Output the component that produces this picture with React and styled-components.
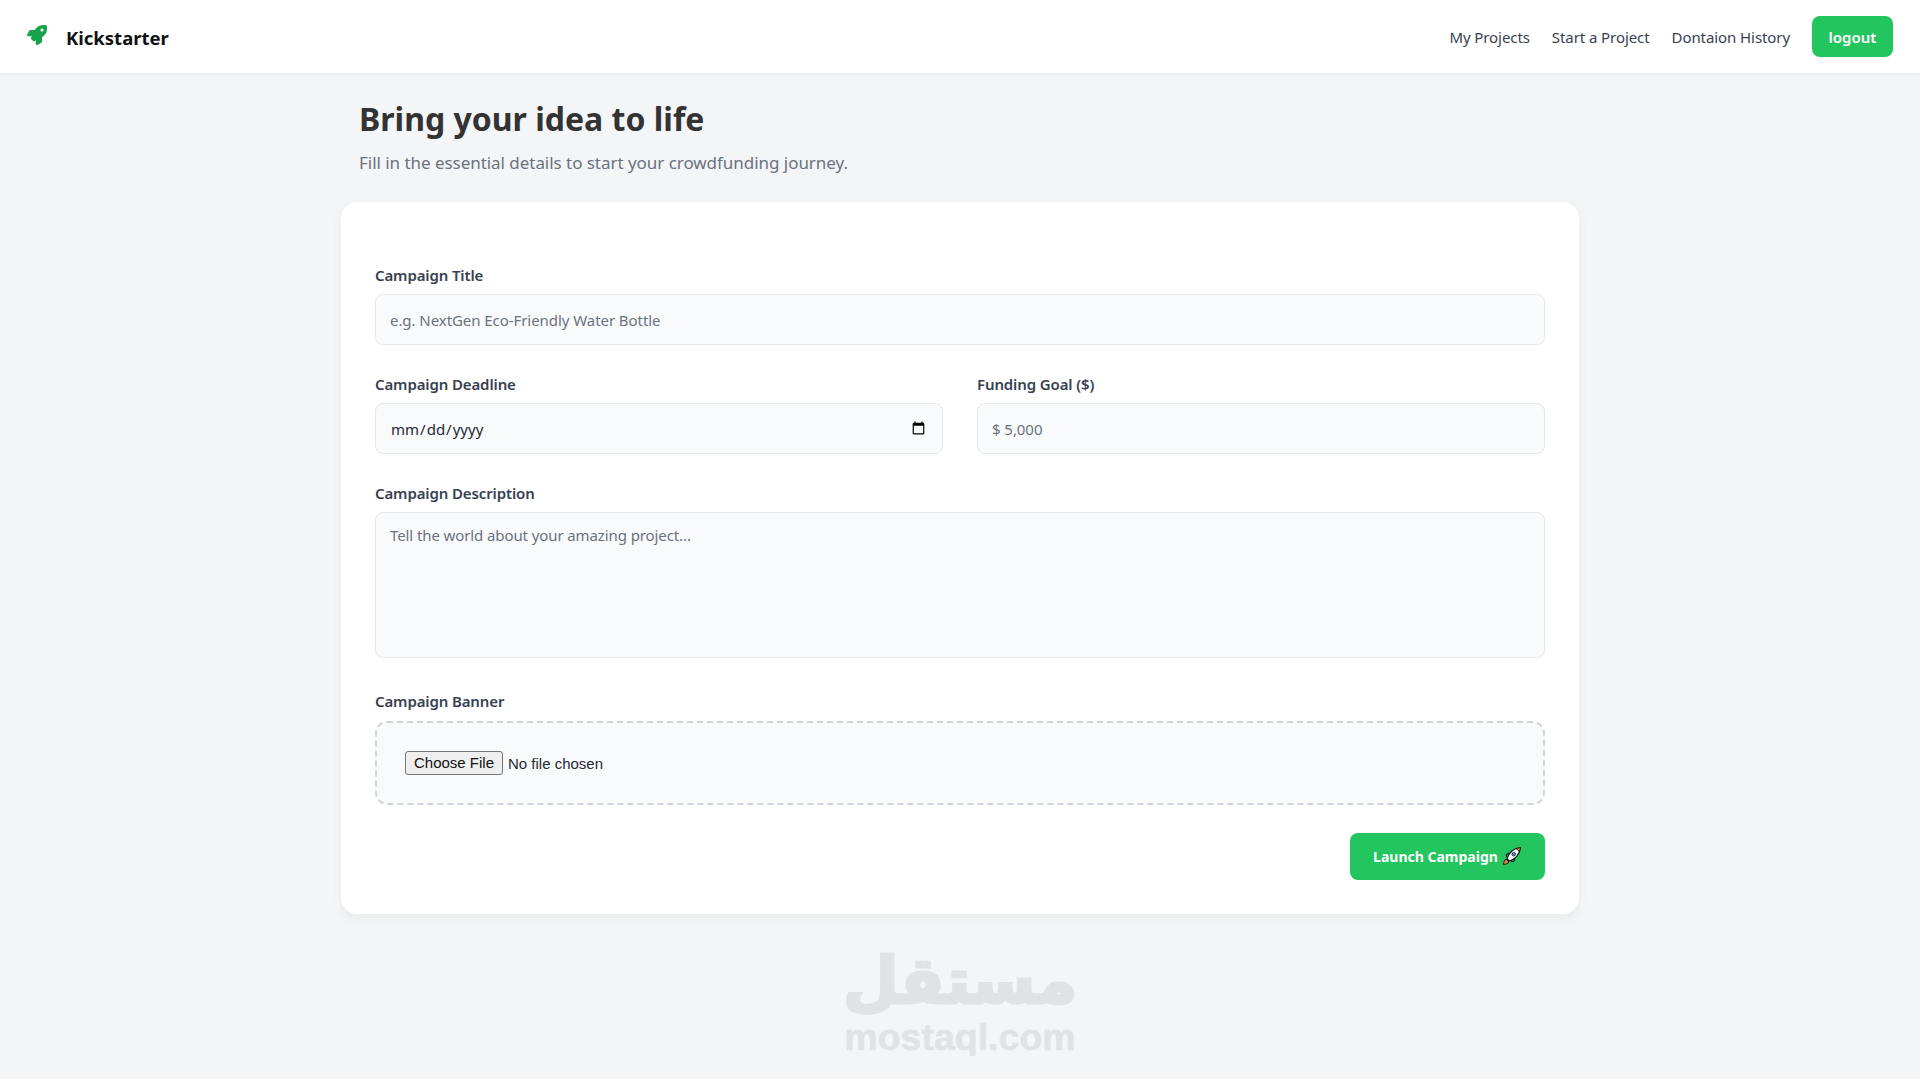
import React from 'react'
import styled, { createGlobalStyle } from 'styled-components'
import { FaRocket } from 'react-icons/fa'

const GlobalStyle = createGlobalStyle`
  html, body { margin: 0; padding: 0; }
  body {
    background: #f4f5f7;
    font-family: "Noto Sans", "Open Sans", sans-serif;
    color: #1f2937;
  }
`

const RocketEmoji = () => (
  <svg width="20" height="20" viewBox="0 0 20 20">
    <path d="M1.500 18.500c.2-2.500 1-4.500 2.500-5.500l3 3c-1 1.500-3 2.300-5.500 2.500z" fill="#e8853a" stroke="#111" strokeWidth="1" strokeLinejoin="round" />
    <path d="M4 8.500L7.500 7l-2 5zM11.500 16L13 12.500l-5 2z" fill="#3f7fc4" stroke="#111" strokeWidth="1" strokeLinejoin="round" />
    <path d="M5 13C6.500 7.500 11 2.500 18.500 1.500 17.500 9 12.500 13.500 7 15z" fill="#f2f7fb" stroke="#111" strokeWidth="1.200" strokeLinejoin="round" />
    <path d="M14 2.700c1.400.5 2.700 1.800 3.300 3.300L18.500 1.500z" fill="#e8853a" stroke="#111" strokeWidth="0.800" strokeLinejoin="round" />
    <circle cx="11.800" cy="8.200" r="1.700" fill="#5d9fd8" stroke="#111" strokeWidth="0.800" />
  </svg>
)

const App = () => {
  return (
    <>
      <GlobalStyle />
      <Nav>
        <Brand>
          <BrandIcon><FaRocket /></BrandIcon>
          <BrandName>Kickstarter</BrandName>
        </Brand>
        <NavLinks>
          <NavLink>My Projects</NavLink>
          <NavLink>Start a Project</NavLink>
          <NavLink>Dontaion History</NavLink>
          <LogoutButton>logout</LogoutButton>
        </NavLinks>
      </Nav>
      <Main>
        <PageHead>
          <Title>Bring your idea to life</Title>
          <Subtitle>Fill in the essential details to start your crowdfunding journey.</Subtitle>
        </PageHead>
        <Card>
          <Field>
            <Label>Campaign Title</Label>
            <Input type="text" placeholder="e.g. NextGen Eco-Friendly Water Bottle" />
          </Field>
          <TwoCols>
            <Field>
              <Label>Campaign Deadline</Label>
              <Input type="date" />
            </Field>
            <Field>
              <Label>Funding Goal ($)</Label>
              <Input type="text" placeholder="$ 5,000" />
            </Field>
          </TwoCols>
          <Field>
            <Label>Campaign Description</Label>
            <TextArea placeholder="Tell the world about your amazing project..." />
          </Field>
          <BannerField>
            <BannerLabel>Campaign Banner</BannerLabel>
            <DropZone>
              <FileInput type="file" />
            </DropZone>
          </BannerField>
          <Actions>
            <LaunchButton>Launch Campaign <RocketEmoji /></LaunchButton>
          </Actions>
        </Card>
        <Watermark>
          <WatermarkArabic>مستقل</WatermarkArabic>
          <WatermarkLatin>mostaql.com</WatermarkLatin>
        </Watermark>
      </Main>
    </>
  )
}

export default App

const Nav = styled.nav`
  height: 73px;
  box-sizing: border-box;
  background: #fff;
  box-shadow: 0 1px 3px rgba(0, 0, 0, 0.06);
  display: flex;
  align-items: center;
  justify-content: space-between;
  padding: 0 27px;
`
const Brand = styled.div`
  display: flex;
  align-items: center;
  gap: 19px;
`
const BrandIcon = styled.span`
  display: flex;
  color: #16a34a;
  font-size: 20px;
  margin-top: -3px;
`
const BrandName = styled.span`
  font-size: 18.500px;
  font-weight: 700;
  color: #111;
  margin-top: 1px;
`
const NavLinks = styled.div`
  display: flex;
  align-items: center;
  gap: 22px;
`
const NavLink = styled.a`
  font-size: 15px;
  letter-spacing: -0.08px;
  color: #374151;
  cursor: pointer;
`
const LogoutButton = styled.button`
  border: 0;
  border-radius: 8px;
  background: #22c55e;
  color: #fff;
  font-family: inherit;
  font-size: 15px;
  font-weight: 600;
  height: 41px;
  width: 81px;
`
const Main = styled.main`
  width: 1238px;
  margin: 0 auto;
`
const PageHead = styled.header`
  padding: 22px 18px 0;
`
const Title = styled.h1`
  margin: 0;
  font-size: 32px;
  line-height: 47px;
  font-weight: 700;
  color: #333;
`
const Subtitle = styled.p`
  margin: 8px 0 0;
  font-size: 17px;
  letter-spacing: -0.04px;
  line-height: 25px;
  color: #6b7280;
`
const Card = styled.form`
  margin-top: 27px;
  background: #fff;
  border-radius: 16px;
  box-shadow: 0 4px 12px rgba(0, 0, 0, 0.05);
  padding: 63px 34px 34px;
  display: flex;
  flex-direction: column;
  gap: 29px;
`
const Field = styled.div`
  display: flex;
  flex-direction: column;
  flex: 1;
`
const BannerField = styled(Field)`
  margin-top: 4px;
`
const TwoCols = styled.div`
  display: flex;
  gap: 34px;
`
const Label = styled.label`
  font-size: 15px;
  font-weight: 600;
  letter-spacing: -0.12px;
  line-height: 20px;
  color: #374151;
  margin-bottom: 9px;
`
const BannerLabel = styled(Label)`
  margin-bottom: 10px;
`
const Input = styled.input`
  box-sizing: border-box;
  height: 51px;
  width: 100%;
  padding: 0 14px;
  background: #f9fafb;
  border: 1px solid #e5e7eb;
  border-radius: 8px;
  font-family: inherit;
  font-size: 15px;
  color: #1f2937;
  &::placeholder { color: #6b7280; letter-spacing: -0.06px; }
`
const TextArea = styled.textarea`
  box-sizing: border-box;
  height: 146px;
  width: 100%;
  padding: 12px 14px;
  background: #f9fafb;
  border: 1px solid #e5e7eb;
  border-radius: 8px;
  font-family: inherit;
  font-size: 15px;
  resize: none;
  &::placeholder { color: #6b7280; letter-spacing: -0.1px; }
`
const DropZone = styled.div`
  box-sizing: border-box;
  height: 84px;
  padding: 0 28px 1px;
  display: flex;
  align-items: center;
  background: #f9fafb;
  border: 2px dashed #d1d5db;
  border-radius: 12px;
`
const FileInput = styled.input`
  font-family: "Liberation Sans", Arial, sans-serif;
  font-size: 15px;
  color: #1f2937;
  &::file-selector-button {
    box-sizing: border-box;
    width: 98px;
    height: 24px;
    margin-right: 5px;
    font: inherit;
    color: #111;
    background: #efefef;
    border: 1px solid #767676;
    border-radius: 3px;
  }
`
const Actions = styled.div`
  display: flex;
  justify-content: flex-end;
  margin-top: -1px;
`
const LaunchButton = styled.button`
  display: flex;
  align-items: center;
  gap: 4px;
  height: 47px;
  width: 195px;
  padding: 0 0 1px;
  justify-content: center;
  border: 0;
  border-radius: 8px;
  background: #22c55e;
  color: #fff;
  font-family: inherit;
  font-size: 14px;
  font-weight: 700;
`
const Watermark = styled.div`
  margin-top: 30px;
  display: flex;
  flex-direction: column;
  align-items: center;
  color: #e0e2e5;
`
const WatermarkArabic = styled.div`
  font-family: "DejaVu Sans", sans-serif;
  font-size: 64px;
  line-height: 74px;
  font-weight: 700;
  -webkit-text-stroke: 3px #e0e2e5;
`
const WatermarkLatin = styled.div`
  font-family: "Liberation Sans", sans-serif;
  font-size: 37.500px;
  line-height: 38px;
  font-weight: 700;
  -webkit-text-stroke: 0.5px #e0e2e5;
`
